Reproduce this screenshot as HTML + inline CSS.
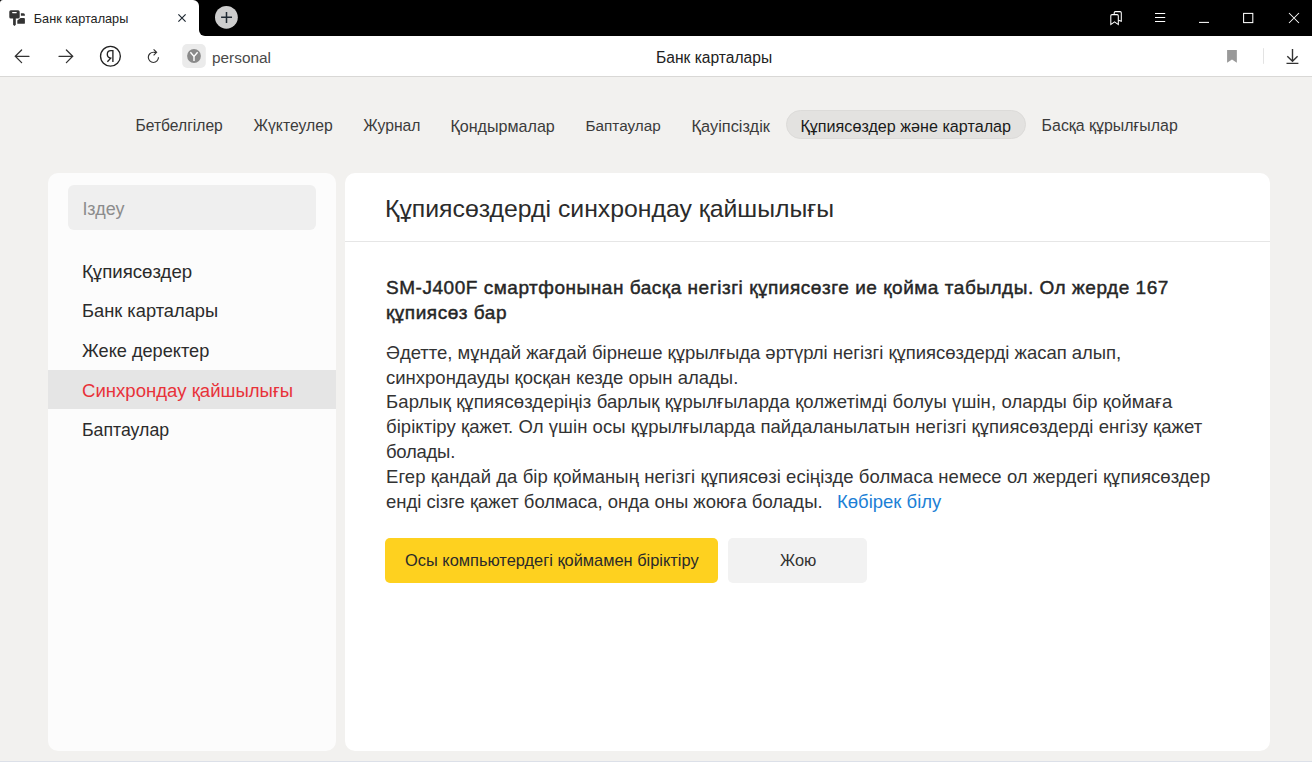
<!DOCTYPE html>
<html><head><meta charset="utf-8">
<style>
*{margin:0;padding:0;box-sizing:border-box}
html,body{width:1312px;height:762px;overflow:hidden;background:#f2f1ef;font-family:"Liberation Sans",sans-serif;position:relative}
.abs{position:absolute;white-space:nowrap}
#top{position:absolute;left:0;top:0;width:1312px;height:36px;background:#000}
#tab{position:absolute;left:0;top:0;width:199px;height:37px;background:#fff;border-radius:3px 6px 0 0}
#addr{position:absolute;left:0;top:36px;width:1312px;height:41px;background:#fff;border-bottom:1px solid #d9d8d6}
.t{position:absolute;white-space:nowrap;line-height:1}
#page{position:absolute;left:0;top:77px;width:1312px;height:685px;background:#f2f1ef}
.nav{position:absolute;top:117px;font-size:15.8px;color:#3b3b3b;white-space:nowrap;line-height:18px}
#pill{position:absolute;left:786px;top:110px;width:240px;height:29px;border-radius:15px;background:#e3e2e0;border:1px solid #dcdbd9}
#side{position:absolute;left:47.5px;top:173px;width:288px;height:578px;background:#fcfcfc;border-radius:10px}
#search{position:absolute;left:67.6px;top:185.2px;width:248.3px;height:44.8px;background:#efefef;border-radius:6px}
.si{position:absolute;left:83px;font-size:18.3px;color:#2b2b2b;white-space:nowrap;line-height:20px}
#act{position:absolute;left:47.5px;top:370px;width:288px;height:39px;background:#e5e5e5}
#main{position:absolute;left:345px;top:173px;width:925px;height:578px;background:#fff;border-radius:10px}
#div{position:absolute;left:345px;top:241px;width:925px;height:1px;background:#e6e6e6}
.p{position:absolute;left:386px;font-size:18.5px;color:#333;white-space:nowrap;line-height:20px}
#btn1{position:absolute;left:385px;top:538px;width:333px;height:44.5px;background:#fed11f;border-radius:5px}
#btn2{position:absolute;left:728px;top:538px;width:139px;height:44.5px;background:#f2f2f2;border-radius:5px}
#bot{position:absolute;left:0;top:761px;width:1312px;height:1px;background:#dce0e8}
</style></head><body>
<div id="top"></div>
<div id="tab"></div>
<div style="position:absolute;left:199px;top:28px;width:8px;height:9px;background:#fff"></div>
<div style="position:absolute;left:199px;top:0;width:30px;height:36px;background:#000;border-bottom-left-radius:6px"></div>
<div id="addr"></div>
<div class="t" style="left:33.8px;top:13px;font-size:12.7px;color:#222">Банк карталары</div>
<div class="t" style="left:656px;top:50px;font-size:15.6px;color:#222">Банк карталары</div>
<div class="t" style="left:212px;top:49.5px;font-size:15.4px;color:#4a4a4a">personal</div>

<div id="page"></div>
<div id="pill"></div>
<div class="nav" style="left:135.5px;font-size:15.64px">Бетбелгілер</div>
<div class="nav" style="left:253.4px;font-size:15.75px">Жүктеулер</div>
<div class="nav" style="left:363.2px;font-size:15.7px">Журнал</div>
<div class="nav" style="left:450.4px;font-size:16.1px">Қондырмалар</div>
<div class="nav" style="left:585.5px;font-size:15.3px">Баптаулар</div>
<div class="nav" style="left:691.6px;font-size:16.35px">Қауіпсіздік</div>
<div class="nav" style="left:800.4px;font-size:16.15px;color:#1a1a1a">Құпиясөздер және карталар</div>
<div class="nav" style="left:1041.6px;font-size:15.92px">Басқа құрылғылар</div>

<div id="side"></div>
<div id="search"></div>
<div class="si" style="top:199px;left:82.4px;font-size:17.95px;color:#8c8c8c">Іздеу</div>
<div id="act"></div>
<div class="si" style="top:262px;left:82px;font-size:18.64px">Құпиясөздер</div>
<div class="si" style="top:301px;left:82px;font-size:18.29px">Банк карталары</div>
<div class="si" style="top:341px;left:82px;font-size:18.16px">Жеке деректер</div>
<div class="si" style="top:381px;left:82px;font-size:18.59px;color:#e8323a">Синхрондау қайшылығы</div>
<div class="si" style="top:420px;left:82px;font-size:17.72px">Баптаулар</div>

<div id="main"></div>
<div id="div"></div>
<div class="t" style="left:385px;top:196.5px;font-size:24.8px;color:#2b2b2b">Құпиясөздерді синхрондау қайшылығы</div>
<div class="p" style="top:278px;font-size:19px;letter-spacing:0.53px;-webkit-text-stroke:0.45px #262626;color:#262626">SM-J400F смартфонынан басқа негізгі құпиясөзге ие қойма табылды. Ол жерде 167</div>
<div class="p" style="top:303px;font-size:19px;letter-spacing:0.53px;-webkit-text-stroke:0.45px #262626;color:#262626">құпиясөз бар</div>
<div class="p" style="top:343px;letter-spacing:-0.02px">Әдетте, мұндай жағдай бірнеше құрылғыда әртүрлі негізгі құпиясөздерді жасап алып,</div>
<div class="p" style="top:368px">синхрондауды қосқан кезде орын алады.</div>
<div class="p" style="top:392px;letter-spacing:0.107px">Барлық құпиясөздеріңіз барлық құрылғыларда қолжетімді болуы үшін, оларды бір қоймаға</div>
<div class="p" style="top:417px;letter-spacing:0.053px">біріктіру қажет. Ол үшін осы құрылғыларда пайдаланылатын негізгі құпиясөздерді енгізу қажет</div>
<div class="p" style="top:442px;letter-spacing:-0.25px">болады.</div>
<div class="p" style="top:467px;letter-spacing:0.059px">Егер қандай да бір қойманың негізгі құпиясөзі есіңізде болмаса немесе ол жердегі құпиясөздер</div>
<div class="p" style="top:492px;letter-spacing:-0.02px">енді сізге қажет болмаса, онда оны жоюға болады.</div>
<div class="p" style="top:492px;left:837px;color:#1c7fd6">Көбірек білу</div>

<div id="btn1"></div>
<div id="btn2"></div>
<div class="t" style="left:405px;top:552px;font-size:16.4px;color:#2a2a2a">Осы компьютердегі қоймамен біріктіру</div>
<div class="t" style="left:780px;top:552px;font-size:16.4px;color:#333">Жою</div>
<div id="bot"></div>
<svg width="1312" height="762" style="position:absolute;left:0;top:0">
<!-- tab foot -->
<!-- key icon -->
<g fill="#333">
<path fill-rule="evenodd" d="M10.8 10.2H18.2Q19.7 10.2 19.7 11.7V17.1Q19.7 18.6 18.2 18.6H10.8Q9.3 18.6 9.3 17.1V11.7Q9.3 10.2 10.8 10.2ZM12.6 11.9H16.3Q16.8 11.9 16.8 12.55Q16.8 13.2 16.3 13.2H12.6Q12.1 13.2 12.1 12.55Q12.1 11.9 12.6 11.9Z"/>
<path d="M13.1 18H15.8V24.8L14.45 25.9L13.1 24.8Z"/>
<path d="M20.9 13.2H23.4Q24.9 13.2 24.9 14.7V15.7H20.9Z"/>
<path d="M20.6 18.1H24Q24.9 18.1 24.9 19V22.9Q24.9 23.8 24 23.8H17.3V20.5Q17.3 20.4 17.5 20.3L19.8 18.4Q20.1 18.1 20.6 18.1Z"/>
</g>
<!-- tab close -->
<path d="M178.4 14.4L185.6 21.6M185.6 14.4L178.4 21.6" stroke="#1c2630" stroke-width="1.15" fill="none"/>
<!-- new tab -->
<circle cx="226.4" cy="17.3" r="11.4" fill="#cdcdcd"/>
<path d="M221.1 17.3H232M226.5 12V22.9" stroke="#1f2933" stroke-width="1.5" fill="none"/>
<!-- window icons -->
<g stroke="#fff" stroke-width="1.05" fill="none">
<path d="M1114.2 14.5V12.8Q1114.2 11.6 1115.4 11.6H1120.1Q1121.3 11.6 1121.3 12.8V21.3L1118.4 20.2"/>
<path d="M1110.8 24.6V15.8Q1110.8 14.6 1112 14.6H1117.1Q1118.3 14.6 1118.3 15.8V24.6L1114.55 21.9Z"/>
<path d="M1155 13.5H1165.2M1155 17.5H1165.2M1155 21.5H1165.2"/>
<path d="M1199 22.4H1209"/>
<rect x="1243.6" y="13.4" width="9.2" height="9.2"/>
<path d="M1289 13L1299 23M1299 13L1289 23"/>
</g>
<!-- address icons -->
<g stroke="#333" stroke-width="1.3" fill="none" stroke-linecap="round">
<path d="M15.5 56.3H29M21.6 50L15.3 56.3L21.6 62.6"/>
<path d="M59 56.3H72.5M66.4 50L72.7 56.3L66.4 62.6"/>
</g>
<g stroke="#222" fill="none">
<circle cx="110.45" cy="56.25" r="9.9" stroke-width="1.35"/>
<path d="M112.9 62.1V50.6H110.9C108.6 50.6 107.3 51.9 107.3 54.2C107.3 56.3 108.7 57.7 110.7 58.1L107.4 61.8" stroke-width="1.35"/>
</g>
<g stroke="#333" stroke-width="1.15" fill="none">
<path d="M153.4 52.25A5.1 5.1 0 1 0 158.5 57.35"/>
<path d="M153.4 52.3H156.5M153.6 49.4L156.6 52.3L153.6 55.4"/>
</g>
<rect x="182.2" y="44" width="23.6" height="23.9" rx="5" fill="#ebebeb"/>
<circle cx="194" cy="56" r="6.9" fill="#8a8a8a"/>
<path d="M190.4 52.3L194 56.4L197.6 52.3M194 56.4V60.9" stroke="#fff" stroke-width="1.4" fill="none"/>
<path d="M1227.1 50H1236.85V62.7L1232 59.5L1227.1 62.7Z" fill="#999"/>
<rect x="1263" y="48.2" width="1" height="15.6" fill="#e3e3e3"/>
<g stroke="#333" stroke-width="1.4" fill="none">
<path d="M1292.5 49V61.2M1287.3 56.3L1292.5 61.3L1297.6 56.3M1286.5 63.4H1298.4"/>
</g>
</svg>

</body></html>
